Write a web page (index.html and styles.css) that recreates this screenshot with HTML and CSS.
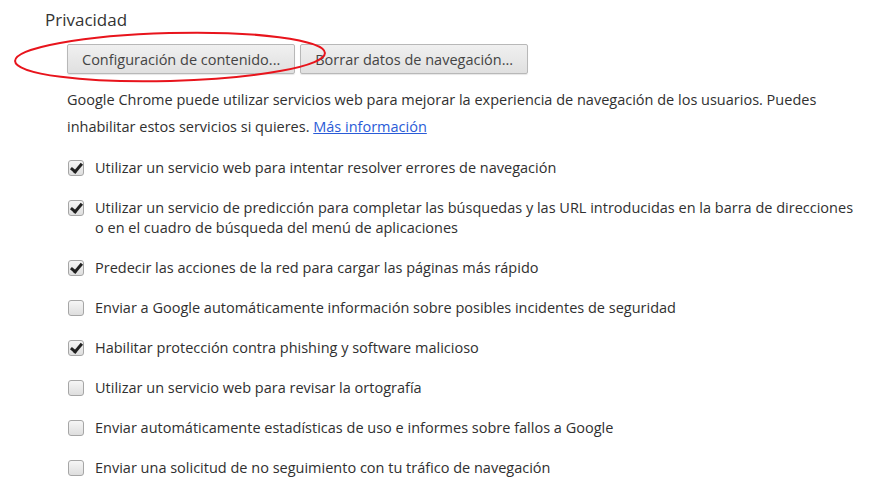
FILE: index.html
```html
<!DOCTYPE html>
<html lang="es">
<head>
  <meta charset="UTF-8">
  <title>Privacidad</title>
  <link rel="stylesheet" href="styles.css">
</head>
<body>

  <div class="section">
    <h2>Privacidad</h2>

    <div class="content">
      <div class="buttons">
        <button>Configuración de contenido...</button>
        <button>Borrar datos de navegación...</button>
      </div>

      <p class="intro">
        Google Chrome puede utilizar servicios web para mejorar la experiencia de navegación de los usuarios. Puedes
        inhabilitar estos servicios si quieres. <a href="#">Más información</a>
      </p>

      <ul class="options">
        <li><span class="box checked"></span><span class="label">Utilizar un servicio web para intentar resolver errores de navegación</span></li>
        <li><span class="box checked"></span><span class="label">Utilizar un servicio de predicción para completar las búsquedas y las URL introducidas en la barra de direcciones o en el cuadro de búsqueda del menú de aplicaciones</span></li>
        <li><span class="box checked"></span><span class="label">Predecir las acciones de la red para cargar las páginas más rápido</span></li>
        <li><span class="box"></span><span class="label">Enviar a Google automáticamente información sobre posibles incidentes de seguridad</span></li>
        <li><span class="box checked"></span><span class="label">Habilitar protección contra phishing y software malicioso</span></li>
        <li><span class="box"></span><span class="label">Utilizar un servicio web para revisar la ortografía</span></li>
        <li><span class="box"></span><span class="label">Enviar automáticamente estadísticas de uso e informes sobre fallos a Google</span></li>
        <li><span class="box"></span><span class="label">Enviar una solicitud de no seguimiento con tu tráfico de navegación</span></li>
      </ul>
    </div>
  </div>

  <!-- red annotation round the first button -->
  <svg class="mark" width="888" height="120" viewBox="0 0 888 120">
    <ellipse cx="170" cy="57" rx="155" ry="24" transform="rotate(-1.5 170 57)"
             fill="none" stroke="#e8141c" stroke-width="2"/>
  </svg>

</body>
</html>
```

FILE: styles.css
```css
/* Global Styles */
body {
  margin: 0;
  padding: 0;
  background: #fff;
  color: #303030;
  font-family: "Open Sans", "Noto Sans", sans-serif;
  font-size: 14.5px;
}

.section {
  padding: 10px 0 0 45px;
}

h2 {
  margin: 0;
  font-size: 17px;
  font-weight: normal;
  line-height: 20px;
  color: #333;
}

.content {
  padding-left: 22px;
}

.buttons {
  display: flex;
  gap: 5px;
  margin-top: 14px;
}

.buttons button {
  height: 30px;
  padding: 0 14px;
  font-family: inherit;
  font-size: 14.5px;
  color: #444;
  background: linear-gradient(#f0f0f0, #e0e0e0);
  border: 1px solid #b8b8b8;
  border-radius: 2px;
  box-shadow: 0 1px 1px rgba(0, 0, 0, 0.1);
}

.intro {
  margin: 12px 0 0;
  width: 775px;
  line-height: 27px;
}

.intro a {
  color: #2a5bd7;
}

.options {
  list-style: none;
  margin: 18px 0 0;
  padding: 0;
}

.options li {
  display: flex;
  align-items: flex-start;
  gap: 11px;
  line-height: 20px;
  margin-bottom: 20px;
}

.label {
  max-width: 765px;
}

.box {
  flex: none;
  width: 14px;
  height: 14px;
  margin-top: 2px;
  margin-left: 1px;
  border: 1px solid #a6a6a6;
  border-radius: 3px;
  background: linear-gradient(#f6f6f6, #dedede);
  position: relative;
}

.box.checked::after {
  content: "";
  position: absolute;
  left: 4px;
  top: 0;
  width: 4px;
  height: 9px;
  border: solid #222;
  border-width: 0 3px 3px 0;
  transform: rotate(40deg);
}

.mark {
  position: absolute;
  top: 0;
  left: 0;
  pointer-events: none;
}
```
